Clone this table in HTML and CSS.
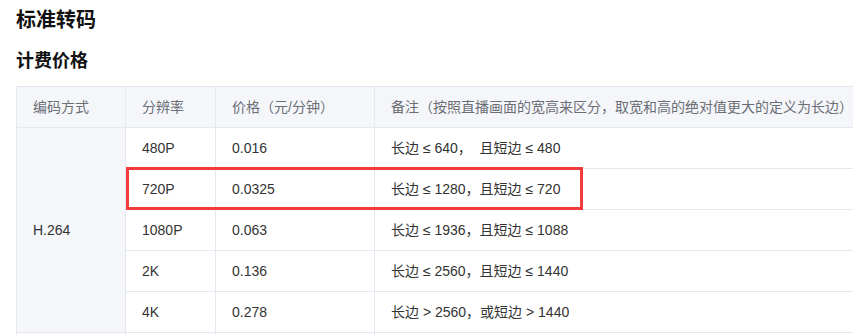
FILE: index.html
```html
<!DOCTYPE html>
<html lang="zh-CN">
<head>
<meta charset="utf-8">
<title>标准转码</title>
<link rel="stylesheet" href="styles.css">
</head>
<body>
<h2 class="title">标准转码</h2>
<h3 class="subtitle">计费价格</h3>
<div class="table-wrap">
  <table class="price-table">
    <colgroup>
      <col class="c1"><col class="c2"><col class="c3"><col class="c4">
    </colgroup>
    <thead>
      <tr>
        <th>编码方式</th>
        <th>分辨率</th>
        <th>价格（元/分钟）</th>
        <th>备注（按照直播画面的宽高来区分，取宽和高的绝对值更大的定义为长边）</th>
      </tr>
    </thead>
    <tbody>
      <tr>
        <td class="codec" rowspan="5">H.264</td>
        <td>480P</td><td>0.016</td><td>长边 ≤ 640，&nbsp; 且短边 ≤ 480</td>
      </tr>
      <tr><td>720P</td><td>0.0325</td><td>长边 ≤ 1280，且短边 ≤ 720</td></tr>
      <tr><td>1080P</td><td>0.063</td><td>长边 ≤ 1936，且短边 ≤ 1088</td></tr>
      <tr><td>2K</td><td>0.136</td><td>长边 ≤ 2560，且短边 ≤ 1440</td></tr>
      <tr><td>4K</td><td>0.278</td><td>长边 &gt; 2560，或短边 &gt; 1440</td></tr>
      <tr class="next-row">
        <td></td><td></td><td></td><td></td>
      </tr>
    </tbody>
  </table>
  <div class="highlight"></div>
</div>
</body>
</html>
```

FILE: styles.css
```css
html, body {
  overflow: hidden;
}
body {
  margin: 0;
  padding: 0 0 0 16px;
  background: #fff;
  font-family: "Liberation Sans", Arial, "Noto Sans CJK SC", sans-serif;
  color: #333;
}
.title {
  margin: 5px 0 0;
  font-size: 20px;
  line-height: 28px;
  font-weight: bold;
  color: #111;
  font-family: "Noto Sans CJK SC", sans-serif;
}
.subtitle {
  margin: 13px 0 0;
  font-size: 18px;
  line-height: 26px;
  font-weight: bold;
  color: #111;
  font-family: "Noto Sans CJK SC", sans-serif;
}
.table-wrap {
  position: relative;
  margin-top: 14px;
  width: 900px;
}
.price-table {
  border-collapse: collapse;
  table-layout: fixed;
  width: 900px;
  font-size: 14px;
}
.c1 { width: 109px; }
.c2 { width: 90px; }
.c3 { width: 159px; }
.c4 { width: 542px; }
.price-table th,
.price-table td {
  border: 1px solid #e5e8f0;
  height: 41px;
  padding: 0 16px;
  line-height: 20px;
  text-align: left;
  vertical-align: middle;
  white-space: nowrap;
  box-sizing: border-box;
}
.price-table th {
  background: #f5f6fa;
  color: #6b6e75;
  font-weight: normal;
}
.price-table td {
  color: #333;
}
.price-table td.codec {
  background: #f5f6fa;
}
.highlight {
  position: absolute;
  left: 110px;
  top: 81px;
  width: 457px;
  height: 43px;
  border: 3px solid #f33c3c;
  box-sizing: border-box;
  pointer-events: none;
}
```
